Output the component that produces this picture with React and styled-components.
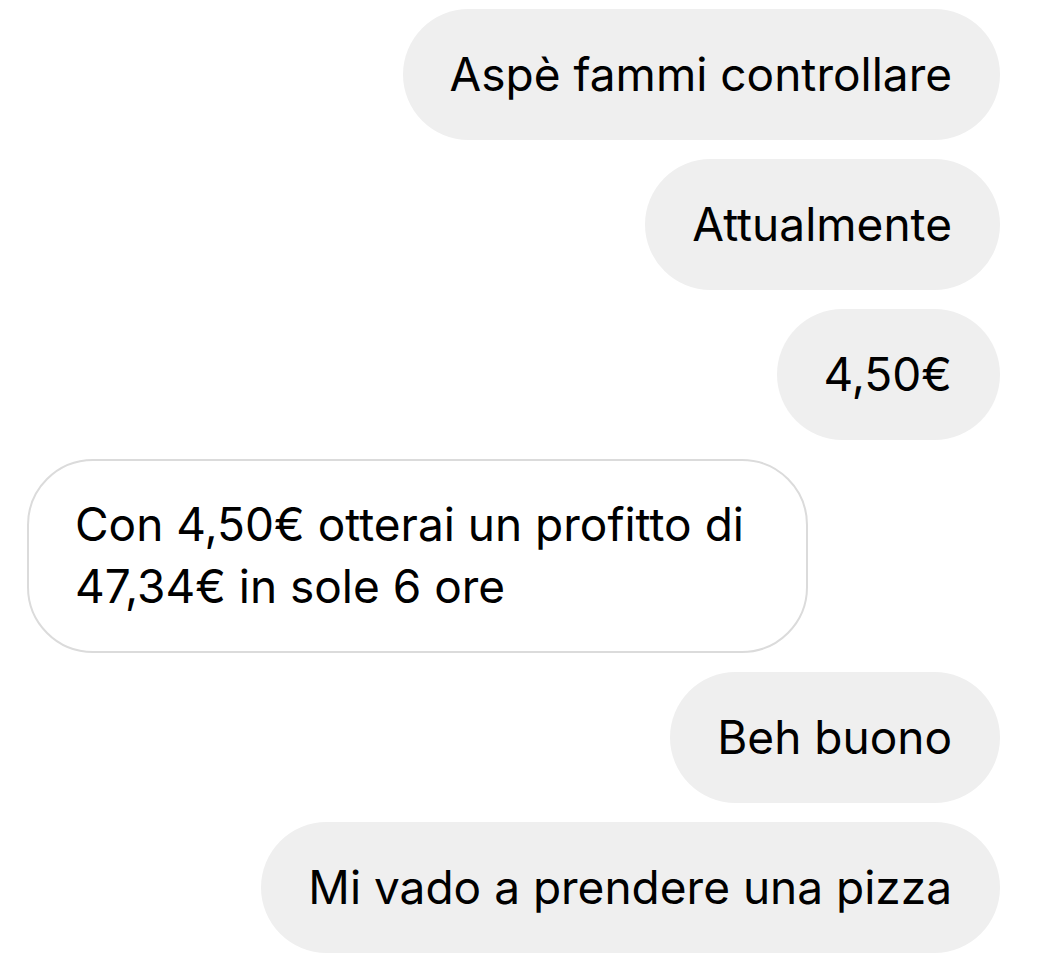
import React from 'react'
import styled, { createGlobalStyle } from 'styled-components'

const messages = [
    { id: 1, mine: true, text: 'Aspè fammi controllare' },
    { id: 2, mine: true, text: 'Attualmente' },
    { id: 3, mine: true, text: '4,50€' },
    { id: 4, mine: false, text: 'Con 4,50€ otterai un profitto di 47,34€ in sole 6 ore' },
    { id: 5, mine: true, text: 'Beh buono' },
    { id: 6, mine: true, text: 'Mi vado a prendere una pizza' },
]

const App = () => {
    return (
        <>
            <GlobalStyle />
            <Thread>
                {messages.map(m => (
                    <Row key={m.id} $mine={m.mine}>
                        <Bubble $mine={m.mine}>{m.text}</Bubble>
                    </Row>
                ))}
            </Thread>
        </>
    )
}

export default App


const GlobalStyle = createGlobalStyle`
    html, body {
        margin: 0;
        padding: 0;
        background: #fff;
    }
    body {
        font-family: Inter, Roboto, "Liberation Sans", sans-serif;
        color: #000;
    }
`;

const Thread = styled.div`
    display: flex;
    flex-direction: column;
    gap: 19px;
    padding: 9px 37px 18px 27px;
    width: 1037px;
    box-sizing: border-box;
`;

const Row = styled.div`
    display: flex;
    justify-content: ${p => (p.$mine ? 'flex-end' : 'flex-start')};
`;

const Bubble = styled.div`
    box-sizing: border-box;
    max-width: 781px;
    min-height: 131px;
    padding: ${p => (p.$mine ? '34px 48px 35px 47px' : '32px 48px 34px 46px')};
    border-radius: 66px;
    background: ${p => (p.$mine ? '#efefef' : '#fff')};
    border: ${p => (p.$mine ? 'none' : '2px solid #dbdbdb')};
    font-size: 46px;
    line-height: 62px;
`;
